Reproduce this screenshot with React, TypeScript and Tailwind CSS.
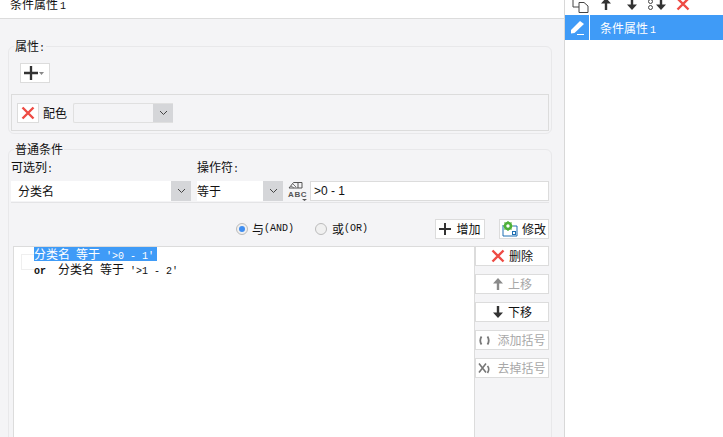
/**
 * Conditional-attribute editor dialog: attribute group, condition group,
 * condition list with its action buttons, and the attribute list on the right.
 */
import type { ReactNode } from "react";

const CJK = "font-['Noto_Sans_CJK_SC','Liberation_Sans',sans-serif]";
const MONO = "font-['Liberation_Mono','Noto_Sans_CJK_SC',monospace]";

function Cross({ size = 14 }: { size?: number }) {
  return (
    <svg width={size} height={size} viewBox="0 0 14 14">
      <path d="M1.5 1.5 12.5 12.5M12.5 1.5 1.5 12.5" stroke="#ee4b44" strokeWidth="2.4" />
    </svg>
  );
}

function Plus({ size = 12 }: { size?: number }) {
  return (
    <svg width={size} height={size} viewBox="0 0 12 12">
      <path d="M0 6H12M6 0V12" stroke="#333" strokeWidth="2" />
    </svg>
  );
}

function Arrow({ up, color }: { up?: boolean; color: string }) {
  return (
    <svg width="12" height="14" viewBox="0 0 12 14" className={up ? "" : "rotate-180"}>
      <path d="M6 1 11 6.5H7.2V13H4.8V6.5H1Z" fill={color} />
    </svg>
  );
}

function Chevron() {
  return (
    <svg width="9" height="6" viewBox="0 0 9 6">
      <path d="M1 1 4.5 4.5 8 1" fill="none" stroke="#444" strokeWidth="1" />
    </svg>
  );
}

function Combo({ className, text }: { className: string; text?: string }) {
  return (
    <div className={`flex h-5 ${className}`}>
      <span className="flex-1 truncate text-xs leading-5 text-[#111]">{text}</span>
      <span className="flex w-5 items-center justify-center bg-[#d5d6d9]">
        <Chevron />
      </span>
    </div>
  );
}

function Radio({ checked }: { checked?: boolean }) {
  return (
    <span className="flex h-3 w-3 items-center justify-center rounded-full border border-[#bbb] bg-[#f0f0f0]">
      {checked && <span className="h-1.5 w-1.5 rounded-full bg-[#3f8df0]" />}
    </span>
  );
}

function ActionButton({
  icon,
  label,
  disabled,
  wide,
}: {
  icon: ReactNode;
  label: string;
  disabled?: boolean;
  wide?: boolean;
}) {
  return (
    <div
      className={`flex h-5 w-[74px] items-center justify-center border border-[#dcdcdc] bg-white text-xs ${
        wide ? "gap-[6px]" : "gap-[4px]"
      } ${disabled ? "text-[#a8a8a8]" : "text-[#111]"}`}
    >
      {icon}
      <span>{label}</span>
    </div>
  );
}

function Ascii({ children }: { children: string }) {
  return <span className={`${MONO} whitespace-pre text-[10px]`}>{children}</span>;
}

function Parens({ crossed }: { crossed?: boolean }) {
  return (
    <svg width="13" height="13" viewBox="0 0 13 13">
      {crossed ? (
        <>
          <path d="M1 1.5 8 10.5M8 1.5 1 10.5" stroke="#777" strokeWidth="1.6" />
          <path d="M9.5 4Q12 7 9.5 11" fill="none" stroke="#777" strokeWidth="1.6" />
        </>
      ) : (
        <>
          <path d="M3.5 2.5Q1 6.5 3.5 10.5" fill="none" stroke="#777" strokeWidth="1.8" />
          <path d="M9.5 2.5Q12 6.5 9.5 10.5" fill="none" stroke="#777" strokeWidth="1.8" />
        </>
      )}
    </svg>
  );
}

export default function App() {
  return (
    <div className={`flex h-[437px] w-[723px] overflow-hidden bg-white text-xs text-[#111] ${CJK}`}>
      <div className="flex h-full w-[565px] shrink-0 flex-col overflow-hidden border-r border-[#d8d8d8] bg-[#f4f4f6]">
        <div className="h-[19px] shrink-0 border-b border-[#dcdcdc] bg-white pl-[10px]">
          <div className="mt-[-4px] text-[12px] leading-[16px]">
            条件属性<span className="ml-[2px]"><Ascii>1</Ascii></span>
          </div>
        </div>

        <fieldset className="ml-[8px] mt-[21px] h-[94px] w-[544px] shrink-0 rounded-[6px] border border-[#e8e8ea] px-[2px]">
          <legend className="ml-[3px] h-3 px-px leading-3">
            属性<Ascii>:</Ascii>
          </legend>
          <div className="ml-[9px] mt-[11px] flex h-5 w-[30px] items-center gap-px border border-[#dcdcdc] bg-white pl-[3px]">
            <Plus size={14} />
            <svg width="5" height="3" viewBox="0 0 5 3">
              <path d="M0 0H5L2.5 3Z" fill="#888" />
            </svg>
          </div>
          <div className="mt-[11px] flex h-[37px] w-[538px] items-center border border-[#dcdcdc] pl-[5px]">
            <span className="flex h-5 w-[22px] items-center justify-center border border-[#dcdcdc] bg-white">
              <Cross />
            </span>
            <span className="ml-[4px] w-[30px]">配色</span>
            <Combo className="w-[100px] rounded-l-[2px] border border-r-0 border-[#e0e0e0]" />
          </div>
        </fieldset>

        <fieldset className="ml-[8px] mt-[9px] h-[320px] w-[544px] shrink-0 rounded-[6px] border border-[#e8e8ea] px-[2px]">
          <legend className="ml-[3px] h-3 px-px leading-3">普通条件</legend>
          <div className="mt-[6px] flex h-3 leading-3">
            <span className="w-[186px]">
              可选列<Ascii>:</Ascii>
            </span>
            <span>
              操作符<Ascii>:</Ascii>
            </span>
          </div>
          <div className="mt-[8px] flex w-[538px] items-center">
            <Combo className="w-[180px] bg-white pl-[7px]" text="分类名" />
            <Combo className="ml-[6px] w-[86px] bg-white" text="等于" />
            <svg width="20" height="20" viewBox="0 0 20 20" className="ml-[4px] shrink-0">
              <path d="M2 7 6.5 1.5H15V7H7Z" fill="none" stroke="#555" />
              <path d="M4 5 7 7M6 3 9 6" stroke="#777" />
              <path d="M11 2V7" stroke="#555" />
              <text x="1" y="15.5" fontSize="8" fontWeight="bold" fontFamily="Liberation Sans" letterSpacing="0.6" fill="#555">
                ABC
              </text>
              <path d="M15 18H20L17.5 20Z" fill="#555" />
            </svg>
            <div className="ml-[3px] h-5 flex-1 border border-[#dcdcdc] bg-white pl-[3px] font-['Liberation_Sans'] leading-[18px]">
              {">0 - 1"}
            </div>
          </div>
          <div className="mt-px h-px w-[538px] bg-[#e4e4e6]" />
          <div className="mt-[16px] flex h-5 w-[538px] items-center">
            <span className="ml-[225px]">
              <Radio checked />
            </span>
            <span className="ml-[4px]">与</span>
            <Ascii>(AND)</Ascii>
            <span className="ml-[21px]">
              <Radio />
            </span>
            <span className="ml-[5px]">或</span>
            <Ascii>(OR)</Ascii>
            <div className="ml-auto flex gap-[14px]">
              <div className="flex h-5 w-[50px] items-center justify-center gap-[5px] border border-[#dcdcdc] bg-white">
                <Plus />
                <span>增加</span>
              </div>
              <div className="flex h-5 w-[50px] items-center justify-center gap-[4px] border border-[#dcdcdc] bg-white">
                <svg width="16" height="16" viewBox="0 0 16 16">
                  <path d="M1 4V15H15V5H11" fill="none" stroke="#1f6fb2" />
                  <rect x="10.5" y="10.5" width="3" height="3" fill="#fff" stroke="#1f6fb2" />
                  <circle cx="6" cy="5" r="3" fill="none" stroke="#4fb03a" strokeWidth="2.6" />
                  <path d="M6 0V10M1 5H11M2.5 1.5 9.5 8.5M9.5 1.5 2.5 8.5" stroke="#4fb03a" strokeWidth="1.2" strokeDasharray="2 6" />
                </svg>
                <span>修改</span>
              </div>
            </div>
          </div>
          <div className="mt-[7px] flex w-[538px] items-start pl-[2px]">
            <div className="h-[200px] w-[462px] border border-[#dcdcdc] bg-white">
              <div className="flex pl-[7px]">
                <div className="mt-[7px] h-4 w-[13px] border border-r-0 border-[#efefef]" />
                <div className="whitespace-pre leading-[14px]">
                  <div className="h-[14px] w-[123px] bg-[#3f9bf7] text-white">
                    分类名<Ascii> </Ascii>等于<Ascii>{" '>0 - 1'"}</Ascii>
                  </div>
                  <div className="mt-px h-[14px]">
                    <span className={`${MONO} text-[10px] font-bold`}>or</span>
                    <span className="ml-[12px]">
                      分类名<Ascii> </Ascii>等于<Ascii>{" '>1 - 2'"}</Ascii>
                    </span>
                  </div>
                </div>
              </div>
            </div>
            <div className="flex flex-col gap-2">
              <ActionButton icon={<Cross />} label="删除" />
              <ActionButton icon={<Arrow up color="#8a8a8a" />} label="上移" disabled />
              <ActionButton icon={<Arrow color="#333" />} label="下移" />
              <ActionButton disabled wide label="添加括号" icon={<Parens />} />
              <ActionButton disabled wide label="去掉括号" icon={<Parens crossed />} />
            </div>
          </div>
        </fieldset>
      </div>

      <div className="flex flex-1 flex-col">
        <div className="flex h-[15px] shrink-0 items-end overflow-hidden pb-[4px] pl-[7px]">
          <svg width="17" height="14" viewBox="0 0 17 14" className="mb-[-2px] shrink-0">
            <path d="M1 0V8H7" fill="none" stroke="#444" />
            <path d="M7 3.5H12L16 7V13.5H7Z" fill="#fff" stroke="#444" />
          </svg>
          <span className="ml-[11px] shrink-0"><Arrow up color="#333" /></span>
          <span className="ml-[14px] shrink-0"><Arrow color="#333" /></span>
          <span className="ml-[10px] flex shrink-0 items-center gap-[2px]">
            <span className="flex flex-col gap-[1px]">
              <span className="h-[5px] w-[5px] rounded-full border border-[#444]" />
              <span className="h-[5px] w-[5px] rounded-full border border-[#444]" />
            </span>
            <Arrow color="#333" />
          </span>
          <span className="ml-[9px] shrink-0"><Cross /></span>
        </div>
        <div className="flex h-[25px] shrink-0 bg-[#3f9bf7] text-white">
          <div className="flex w-[25px] items-center justify-center border-r border-white">
            <svg width="15" height="15" viewBox="0 0 15 15">
              <path d="M1 10 10 1 14 4 4.5 13 1 13.5Z" fill="#fff" />
              <path d="M7 14.5H14" stroke="#fff" />
            </svg>
          </div>
          <div className="pl-[10px] leading-[25px]">
            条件属性<span className="ml-[2px]"><Ascii>1</Ascii></span>
          </div>
        </div>
      </div>
    </div>
  );
}
